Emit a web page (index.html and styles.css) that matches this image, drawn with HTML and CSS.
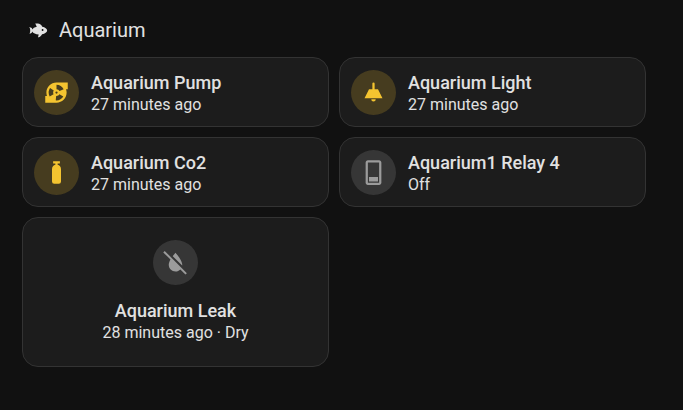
FILE: index.html
```html
<!DOCTYPE html>
<html lang="en">
<head>
  <meta charset="UTF-8">
  <meta name="viewport" content="width=device-width, initial-scale=1">
  <title>Aquarium</title>
  <link rel="stylesheet" href="styles.css">
</head>

<body>
  <main class="container">
    <!-- Section title -->
    <h1 class="title">
      <svg class="title-icon" viewBox="0 0 24 24" aria-hidden="true"><path d="M12,20L12.76,17C9.5,16.79 6.59,15.4 5.75,13.58C5.66,14.06 5.53,14.5 5.33,14.83C4.67,16 3.33,16 2,16C3.1,16 3.5,14.43 3.5,12.5C3.5,10.57 3.1,9 2,9C3.33,9 4.67,9 5.33,10.17C5.53,10.5 5.66,10.94 5.75,11.42C6.4,10 8.32,8.85 10.66,8.32L9,5C11,5 13,5 14.33,5.67C15.46,6.23 16.11,7.27 16.69,8.38C19.61,9.08 22,10.66 22,12.5C22,14.38 19.5,16 16.5,16.66C15.67,17.76 14.86,18.78 14.17,19.33C13.33,20 12.67,20 12,20M17,11A1,1 0 0,0 16,12A1,1 0 0,0 17,13A1,1 0 0,0 18,12A1,1 0 0,0 17,11Z"/></svg>
      Aquarium
    </h1>

    <!-- Entity cards -->
    <div class="cards">
      <button class="card" type="button">
        <span class="shape on">
          <svg class="icon" viewBox="0 0 24 24" aria-hidden="true"><path d="M2 21V15H3.5C3.18 14.06 3 13.05 3 12C3 7.03 7.03 3 12 3H22V9H20.5C20.82 9.94 21 10.95 21 12C21 16.97 16.97 21 12 21H2M5 12C5 13.28 5.34 14.47 5.94 15.5L9.4 13.5C9.15 13.06 9 12.55 9 12C9 11.35 9.21 10.75 9.56 10.26L6.3 7.93C5.5 9.08 5 10.5 5 12M12 19C14.59 19 16.85 17.59 18.06 15.5L14.6 13.5C14.08 14.4 13.11 15 12 15L11.71 15L11.33 18.97L12 19M12 9C13.21 9 14.26 9.72 14.73 10.76L18.37 9.1C17.27 6.68 14.83 5 12 5V9M12 11A1 1 0 0 0 11 12A1 1 0 0 0 12 13A1 1 0 0 0 13 12A1 1 0 0 0 12 11Z"/></svg>
        </span>
        <span class="info">
          <span class="name">Aquarium Pump</span>
          <span class="state">27 minutes ago</span>
        </span>
      </button>

      <button class="card" type="button">
        <span class="shape on">
          <svg class="icon" viewBox="0 0 24 24" aria-hidden="true"><path d="M8,9H11V4A1,1 0 0,1 12,3A1,1 0 0,1 13,4V9H16L20,17H4L8,9M14,18A2,2 0 0,1 12,20A2,2 0 0,1 10,18H14Z"/></svg>
        </span>
        <span class="info">
          <span class="name">Aquarium Light</span>
          <span class="state">27 minutes ago</span>
        </span>
      </button>

      <button class="card" type="button">
        <span class="shape on">
          <svg class="icon" viewBox="0 0 24 24" aria-hidden="true"><path d="M16,9V20A2,2 0 0,1 14,22H10A2,2 0 0,1 8,20V9C8,7.14 9.27,5.57 11,5.13V4H9V2H15V4H13V5.13C14.73,5.57 16,7.14 16,9Z"/></svg>
        </span>
        <span class="info">
          <span class="name">Aquarium Co2</span>
          <span class="state">27 minutes ago</span>
        </span>
      </button>

      <button class="card" type="button">
        <span class="shape">
          <svg class="icon" viewBox="0 0 24 24" aria-hidden="true"><path d="M17,3V21H7V3H17M17,1H7C5.9,1 5,1.9 5,3V21C5,22.1 5.9,23 7,23H17C18.1,23 19,22.1 19,21V3C19,1.9 18.1,1 17,1M16,16H8V20H16V16Z"/></svg>
        </span>
        <span class="info">
          <span class="name">Aquarium1 Relay 4</span>
          <span class="state">Off</span>
        </span>
      </button>

      <button class="card vertical" type="button">
        <span class="shape">
          <svg class="icon" viewBox="0 0 24 24" aria-hidden="true"><path d="M20.84 22.73L16.29 18.18C15.2 19.3 13.69 20 12 20C8.69 20 6 17.31 6 14C6 12.67 6.67 11.03 7.55 9.44L1.11 3L2.39 1.73L22.11 21.46L20.84 22.73M18 14C18 10 12 3.25 12 3.25S10.84 4.55 9.55 6.35L17.95 14.75C18 14.5 18 14.25 18 14Z"/></svg>
        </span>
        <span class="info">
          <span class="name">Aquarium Leak</span>
          <span class="state">28 minutes ago · Dry</span>
        </span>
      </button>
    </div>
  </main>
</body>
</html>
```
FILE: styles.css
```css
body {
  margin: 0;
  background-color: #111111;
  color: #e1e1e1;
  font-family: Roboto, sans-serif;
}

.container {
  padding: 15px 37px 40px 22px;
}

.title {
  display: flex;
  align-items: center;
  gap: 10px;
  margin: 0 0 12px;
  padding-left: 5px;
  font-size: 20px;
  line-height: 30px;
  font-weight: 400;
}

.title-icon {
  width: 22px;
  height: 22px;
  fill: currentColor;
}

.cards {
  display: grid;
  grid-template-columns: 1fr 1fr;
  gap: 10px;
}

.card {
  display: flex;
  align-items: center;
  gap: 12px;
  min-width: 0;
  min-height: 70px;
  padding: 11px;
  border: 1px solid #333333;
  border-radius: 16px;
  background-color: #1c1c1c;
  color: inherit;
  font-family: inherit;
  text-align: left;
  cursor: pointer;
}

.shape {
  display: flex;
  flex-shrink: 0;
  align-items: center;
  justify-content: center;
  width: 45px;
  height: 45px;
  border-radius: 50%;
  background-color: #363636;
  color: #9b9b9b;
}

.shape.on {
  background-color: #463c1f;
  color: #f4c430;
}

.icon {
  width: 27px;
  height: 27px;
  fill: currentColor;
}

.info {
  display: flex;
  flex-direction: column;
  min-width: 0;
  padding-top: 2px;
}

.name {
  font-size: 18px;
  line-height: 24px;
  font-weight: 500;
}

.state {
  font-size: 16px;
  line-height: 20px;
}

/* Icon above the text */
.card.vertical {
  flex-direction: column;
  justify-content: center;
  min-height: 150px;
  padding-bottom: 13px;
  text-align: center;
}
```
